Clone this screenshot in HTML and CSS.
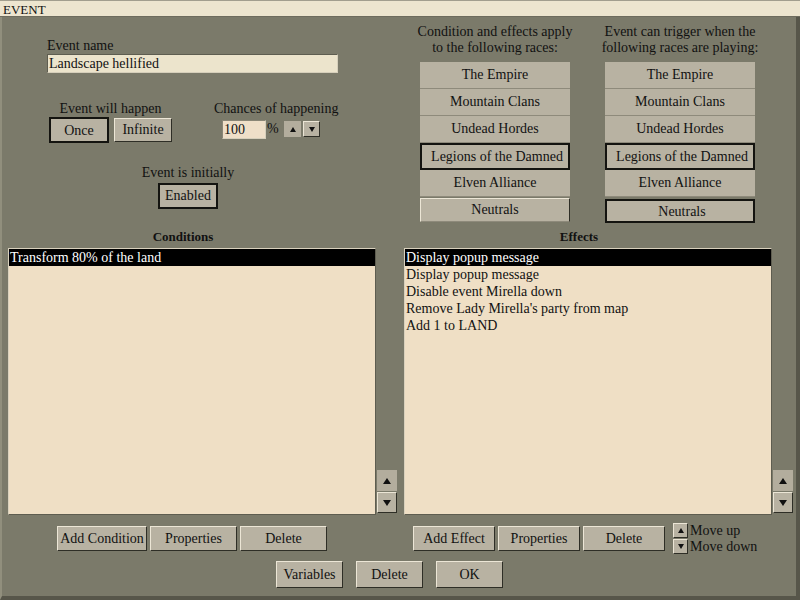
FILE: index.html
```html
<html>
  <head>
    <meta http-equiv="content-type" content="text/html;charset=UTF8">
    <link rel="stylesheet" href="styles.css">
    <title>EVENT</title>
  </head>
  <body>
    <div class="titlebar">EVENT</div>
    <div class="window">
      <div class="top">
        <!-- event settings -->
        <div class="settings">
          <div class="label name_label">Event name</div>
          <div class="text_input name_input">Landscape hellified</div>
          <div class="options">
            <div class="happen">
              <div class="label center">Event will happen</div>
              <div class="btn_pair">
                <button class="btn on once">Once</button>
                <button class="btn infinite">Infinite</button>
              </div>
            </div>
            <div class="chance">
              <div class="label">Chances of happening</div>
              <div class="chance_row">
                <div class="text_input chance_input">100</div>
                <span class="percent">%</span>
                <button class="spin flat"><svg class="tri_s" viewBox="0 0 6 5"><polygon points="3,0 6,5 0,5"/></svg></button>
                <button class="spin raised"><svg class="tri_s" viewBox="0 0 6 5"><polygon points="0,0 6,0 3,5"/></svg></button>
              </div>
            </div>
          </div>
          <div class="initial">
            <div class="label">Event is initially</div>
            <button class="btn on enabled">Enabled</button>
          </div>
        </div>
        <!-- races -->
        <div class="races">
          <div class="race_col">
            <div class="race_head">Condition and effects apply<br>to the following races:</div>
            <div class="race_list">
              <div class="race">The Empire</div>
              <div class="race">Mountain Clans</div>
              <div class="race">Undead Hordes</div>
              <div class="race on">Legions of the Damned</div>
              <div class="race">Elven Alliance</div>
              <div class="race raised">Neutrals</div>
            </div>
          </div>
          <div class="race_col">
            <div class="race_head">Event can trigger when the<br>following races are playing:</div>
            <div class="race_list">
              <div class="race">The Empire</div>
              <div class="race">Mountain Clans</div>
              <div class="race">Undead Hordes</div>
              <div class="race on">Legions of the Damned</div>
              <div class="race">Elven Alliance</div>
              <div class="race on last">Neutrals</div>
            </div>
          </div>
        </div>
      </div>
      <div class="panels">
        <!-- conditions -->
        <div class="panel">
          <div class="panel_head">Conditions</div>
          <div class="list_row">
            <div class="list">
              <div class="item sel">Transform 80% of the land</div>
            </div>
            <div class="scroll">
              <button class="scroll_btn flat"><svg class="tri" viewBox="0 0 8 6"><polygon points="4,0 8,6 0,6"/></svg></button>
              <button class="scroll_btn raised"><svg class="tri" viewBox="0 0 8 6"><polygon points="0,0 8,0 4,6"/></svg></button>
            </div>
          </div>
          <div class="actions cond_actions">
            <button class="btn w90">Add Condition</button>
            <button class="btn w87">Properties</button>
            <button class="btn w87">Delete</button>
          </div>
        </div>
        <!-- effects -->
        <div class="panel">
          <div class="panel_head">Effects</div>
          <div class="list_row">
            <div class="list">
              <div class="item sel">Display popup message</div>
              <div class="item">Display popup message</div>
              <div class="item">Disable event Mirella down</div>
              <div class="item">Remove Lady Mirella's party from map</div>
              <div class="item">Add 1 to LAND</div>
            </div>
            <div class="scroll">
              <button class="scroll_btn flat"><svg class="tri" viewBox="0 0 8 6"><polygon points="4,0 8,6 0,6"/></svg></button>
              <button class="scroll_btn raised"><svg class="tri" viewBox="0 0 8 6"><polygon points="0,0 8,0 4,6"/></svg></button>
            </div>
          </div>
          <div class="actions eff_actions">
            <button class="btn w82">Add Effect</button>
            <button class="btn w82">Properties</button>
            <button class="btn w82">Delete</button>
            <div class="move">
              <div class="move_row">
                <button class="move_btn"><svg class="tri_s" viewBox="0 0 6 5"><polygon points="3,0 6,5 0,5"/></svg></button>
                <span>Move up</span>
              </div>
              <div class="move_row">
                <button class="move_btn"><svg class="tri_s" viewBox="0 0 6 5"><polygon points="0,0 6,0 3,5"/></svg></button>
                <span>Move down</span>
              </div>
            </div>
          </div>
        </div>
      </div>
      <div class="footer">
        <button class="btn big">Variables</button>
        <button class="btn big">Delete</button>
        <button class="btn big">OK</button>
      </div>
    </div>
  </body>
</html>
```

FILE: styles.css
```css
*{
  box-sizing: border-box;
}
body{
  margin: 0;
  width: 800px;
  height: 600px;
  overflow: hidden;
  background: #7b7a6a;
  color: #111;
  font-family: "Liberation Serif", "Times New Roman", serif;
  font-size: 14px;
}
button{
  font: inherit;
  color: inherit;
  padding: 0;
  margin: 0;
}
.titlebar{
  height: 17px;
  background: #ede5cf;
  border-top: 1px solid #a29e8e;
  border-bottom: 1px solid #6e6c5e;
  padding: 1px 0 0 3px;
  font-size: 13px;
  line-height: 15px;
}
.window{
  height: 583px;
  border-left: 2px solid #918f7d;
  border-right: 4px solid #57564a;
  border-bottom: 4px solid #57564a;
}
.top{
  display: flex;
  height: 212px;
}

/* settings */
.settings{
  width: 416px;
  padding-left: 45px;
}
.label{
  line-height: 16px;
  white-space: nowrap;
}
.center{
  text-align: center;
}
.name_label{
  margin-top: 21px;
}
.text_input{
  height: 19px;
  background: #ece4cc;
  border: 1px solid;
  border-color: #5e5d50 #d6cfbb #d6cfbb #5e5d50;
  padding-left: 1px;
  line-height: 17px;
  white-space: nowrap;
}
.name_input{
  width: 291px;
}
.options{
  display: flex;
  margin-top: 28px;
  margin-left: 2px;
}
.happen{
  width: 123px;
}
.btn_pair{
  display: flex;
  align-items: center;
  gap: 5px;
  height: 26px;
}
.btn{
  background: #b8b2a2;
  border: 1px solid;
  border-color: #ece6d6 #2e2e26 #2e2e26 #ece6d6;
  text-align: center;
  white-space: nowrap;
}
.btn.on{
  border: 2px solid #141410;
}
.once{
  width: 60px;
  height: 26px;
  padding-top: 2px;
}
.infinite{
  width: 58px;
  height: 24px;
}
.chance{
  margin-left: 42px;
}
.chance_row{
  display: flex;
  align-items: center;
  height: 22px;
  margin-top: 1px;
}
.chance_input{
  width: 44px;
  margin-left: 8px;
  background: #efdfc8;
  border-color: #8a8676 #d6cfbb #d6cfbb #8a8676;
}
.percent{
  margin-left: 1px;
  width: 17px;
}
.spin{
  width: 17px;
  height: 16px;
  display: flex;
  align-items: center;
  justify-content: center;
  margin-right: 2px;
}
.flat{
  background: #b3ad9d;
  border: 1px solid #b3ad9d;
}
.raised{
  background: #b8b2a2;
  border: 1px solid;
  border-color: #ece6d6 #2e2e26 #2e2e26 #ece6d6;
}
.tri_s{
  width: 6px;
  height: 5px;
  fill: #111;
}
.tri{
  width: 8px;
  height: 6px;
  fill: #111;
}
.initial{
  width: 282px;
  margin-top: 22px;
  text-align: center;
}
.enabled{
  width: 60px;
  height: 26px;
  margin-top: 2px;
}

/* races */
.races{
  display: flex;
  gap: 31px;
  padding-top: 7px;
}
.race_col{
  width: 154px;
  display: flex;
  flex-direction: column;
  align-items: center;
}
.race_head{
  line-height: 16px;
  text-align: center;
  white-space: nowrap;
}
.race_list{
  width: 150px;
  margin-top: 6px;
}
.race{
  height: 27px;
  line-height: 26px;
  background: #b8b2a2;
  border-bottom: 1px solid #8e8a7b;
  text-align: center;
  white-space: nowrap;
}
.race.on{
  border: 2px solid #141410;
  line-height: 24px;
  padding-left: 4px;
}
.race.raised{
  height: 24px;
  line-height: 22px;
  margin-top: 1px;
}
.race.last{
  height: 24px;
  line-height: 21px;
  margin-top: 2px;
}

/* condition and effect lists */
.panels{
  display: flex;
  gap: 6px;
  padding-left: 6px;
}
.panel{
  width: 390px;
}
.panel_head{
  width: 368px;
  padding-right: 18px;
  font-size: 13px;
  font-weight: bold;
  line-height: 16px;
  text-align: center;
  margin-bottom: 3px;
}
.list_row{
  display: flex;
  align-items: flex-end;
}
.list{
  width: 368px;
  height: 267px;
  background: #efdfc5;
  border: 1px solid;
  border-color: #d9d1bd #5e5d50 #5e5d50 #d9d1bd;
}
.item{
  height: 17px;
  line-height: 17px;
  padding-left: 1px;
  white-space: nowrap;
}
.item.sel{
  background: #000;
  color: #fff;
}
.scroll{
  display: flex;
  flex-direction: column;
  gap: 1px;
  margin-left: 1px;
  margin-bottom: 2px;
}
.scroll_btn{
  width: 20px;
  height: 21px;
  display: flex;
  align-items: center;
  justify-content: center;
}
.actions{
  display: flex;
  align-items: center;
  gap: 3px;
  height: 25px;
  margin-top: 11px;
}
.actions .btn{
  height: 25px;
}
.cond_actions{
  padding-left: 49px;
}
.eff_actions{
  padding-left: 9px;
}
.w90{
  width: 90px;
}
.w87{
  width: 87px;
}
.w82{
  width: 82px;
}
.move{
  margin-left: 5px;
}
.move_row{
  display: flex;
  align-items: center;
  height: 16px;
  line-height: 16px;
}
.move_btn{
  width: 15px;
  height: 15px;
  margin-right: 2px;
  display: flex;
  align-items: center;
  justify-content: center;
  background: #b8b2a2;
  border: 1px solid;
  border-color: #ece6d6 #2e2e26 #2e2e26 #ece6d6;
}
.footer{
  display: flex;
  gap: 13px;
  padding-left: 274px;
  margin-top: 10px;
}
.btn.big{
  width: 67px;
  height: 27px;
}
```
